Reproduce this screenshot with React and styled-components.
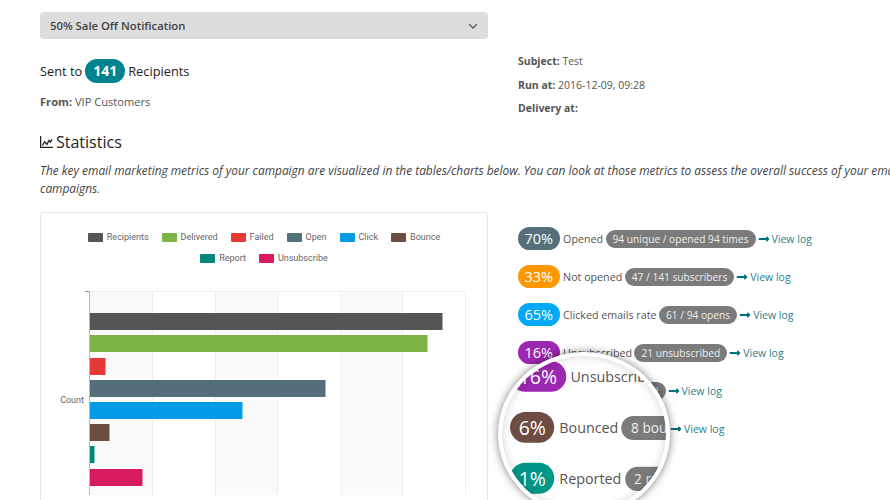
import React from 'react';
import styled, { createGlobalStyle } from 'styled-components';
import { FaLongArrowAltRight } from 'react-icons/fa';

const Global = createGlobalStyle`
  html, body { margin: 0; padding: 0; background: #fff; overflow: hidden; height: 500px; }
  body { font-family: "Open Sans", "Liberation Sans", sans-serif; color: #444; }
  #root { width: 890px; height: 500px; overflow: hidden; position: relative; }
`;

const Page = styled.div`
  width: 950px;
  padding: 12px 0 0 40px;
  box-sizing: border-box;
`;
const SelectBar = styled.div`
  width: 448px;
  height: 27px;
  box-sizing: border-box;
  background: #ddd;
  border-radius: 4px;
  padding: 0 10px;
  display: flex;
  align-items: center;
  justify-content: space-between;
  font-size: 11.3px;
  font-weight: 600;
  color: #444;
`;
const Summary = styled.div`
  display: grid;
  grid-template-columns: 478px 1fr;
  margin-top: 11px;
`;
const SentLine = styled.div`
  display: flex;
  align-items: center;
  height: 24px;
  margin-top: 9px;
  font-size: 12.8px;
  font-weight: 500;
  color: #222;
  gap: 3px;
`;
const CountBadge = styled.span`
  background: #00838f;
  color: #fff;
  font-size: 14px;
  font-weight: 700;
  height: 24px;
  line-height: 24px;
  padding: 0 8px;
  border-radius: 12px;
`;
const Meta = styled.div`
  font-size: ${p => p.$size}px;
  line-height: 16px;
  color: #555;
  margin-top: ${p => p.$top}px;
  b { font-weight: 700; }
`;
const Heading = styled.h2`
  display: flex;
  align-items: center;
  gap: 3px;
  margin: 15px 0 0;
  font-size: 16px;
  line-height: 22px;
  font-weight: 500;
  color: #222;
`;
const Intro = styled.p`
  margin: 8px 0 0;
  font-size: 11.9px;
  line-height: 18px;
  font-style: italic;
  color: #444;
`;
const Stats = styled.div`
  display: grid;
  grid-template-columns: 448px 1fr;
  column-gap: 30px;
  margin-top: 15px;
`;
const Card = styled.div`
  height: 320px;
  box-sizing: border-box;
  border: 1px solid #e6e6e6;
  border-radius: 3px;
  box-shadow: 0 0 2px rgba(0,0,0,.06);
  padding-top: 18px;
`;
const Legend = styled.div`
  display: flex;
  flex-wrap: wrap;
  justify-content: center;
  gap: 9px 13px;
  width: 380px;
  margin: 0 auto;
`;
const LegendItem = styled.div`
  display: flex;
  align-items: center;
  gap: 4px;
  height: 12px;
  font-family: Roboto, sans-serif;
  font-size: 9px;
  color: #666;
`;
const Swatch = styled.i`
  display: block;
  width: 15px;
  height: 9px;
  border-radius: 1px;
  background: ${p => p.$color};
`;
const Plot = styled.svg`
  display: block;
  margin-top: 21px;
`;
const RowList = styled.div`
  display: flex;
  flex-direction: column;
  gap: 15px;
  padding-top: 15px;
`;
const Row = styled.div`
  display: flex;
  align-items: center;
  height: 23px;
  font-size: 10.7px;
  color: #555;
  white-space: nowrap;
`;
const Percent = styled.span`
  background: ${p => p.$color};
  color: #fff;
  font-size: 14.5px;
  height: 23px;
  line-height: 23px;
  padding: 0 6.5px;
  border-radius: 11.5px;
  margin-right: 3.5px;
`;
const Detail = styled.span`
  background: #7b7b7b;
  color: #eee;
  font-size: 10.2px;
  font-weight: 500;
  height: 18px;
  line-height: 18px;
  padding: 0 7px;
  border-radius: 9px;
  margin-left: 2.5px;
  margin-right: 2px;
`;
const LogLink = styled.a`
  display: inline-flex;
  align-items: center;
  gap: 2px;
  color: #2a8090;
  font-size: 10.5px;
  svg { color: #00707c; }
`;
const Lens = styled.div`
  position: absolute;
  left: 498px;
  top: 352px;
  width: 172px;
  height: 164px;
  box-sizing: border-box;
  border: 4px solid #fff;
  border-radius: 50%;
  background: #fff;
  overflow: hidden;
  box-shadow: 0 0 8px rgba(0,0,0,.5);
  &::after {
    content: "";
    position: absolute;
    inset: 0;
    border-radius: 50%;
    box-shadow: inset 0 0 10px rgba(0,0,0,.18);
  }
`;
const LensContent = styled.div`
  position: absolute;
  left: 7.5px;
  top: 4.6px;
  width: 300px;
  transform: scale(1.34);
  transform-origin: 0 0;
`;
const LensList = styled(RowList)`
  padding-top: 0;
`;

const legend = [
  ['Recipients', '#555'], ['Delivered', '#7cb342'], ['Failed', '#e53935'], ['Open', '#546e7a'],
  ['Click', '#039be5'], ['Bounce', '#6d4c41'], ['Report', '#00897b'], ['Unsubscribe', '#d81b60'],
];
const bars = [
  [313, 352.5, '#555'], [335, 337.5, '#7cb342'], [358, 15.5, '#e53935'], [380, 235.5, '#546e7a'],
  [402, 152.5, '#039be5'], [424, 19.5, '#6d4c41'], [446, 4.5, '#00897b'], [469, 52.5, '#d81b60'],
];
const rows = [
  ['70%', '#546e7a', 'Opened', '94 unique / opened 94 times'],
  ['33%', '#ff9800', 'Not opened', '47 / 141 subscribers'],
  ['65%', '#03a9f4', 'Clicked emails rate', '61 / 94 opens'],
  ['16%', '#9c27b0', 'Unsubscribed', '21 unsubscribed'],
  ['6%', '#6d4c41', 'Bounced', '8 bounced'],
  ['1%', '#009688', 'Reported', '2 reported'],
];

const StatRow = ({ r }) => (
  <Row>
    <Percent $color={r[1]}>{r[0]}</Percent>
    {r[2]}
    <Detail>{r[3]}</Detail>
    <LogLink><FaLongArrowAltRight size={12} />View log</LogLink>
  </Row>
);

export default function App() {
  return (
    <>
      <Global />
      <Page>
        <SelectBar>
          50% Sale Off Notification
          <svg width="10" height="6" viewBox="0 0 10 6" fill="none" stroke="#666" strokeWidth="1.5"><path d="M1 1l4 4 4-4" /></svg>
        </SelectBar>
        <Summary>
          <div>
            <SentLine>Sent to <CountBadge>141</CountBadge> Recipients</SentLine>
            <Meta $size={11.1} $top={11}><b>From:</b> VIP Customers</Meta>
          </div>
          <div>
            <Meta $size={10.5} $top={3}><b>Subject:</b> Test</Meta>
            <Meta $size={10.5} $top={8}><b>Run at:</b> 2016-12-09, 09:28</Meta>
            <Meta $size={10.5} $top={7}><b>Delivery at:</b></Meta>
          </div>
        </Summary>
        <Heading>
          <svg width="13" height="12" viewBox="0 0 13 12" fill="none" stroke="#222" strokeWidth="1.3"><path d="M.6 0v11.4H13" /><path d="M2.4 9.5l2.2-3.6 2.4 2.4 2-3.8 1.4 1.6L12 3.4" /></svg>
          Statistics
        </Heading>
        <Intro>The key email marketing metrics of your campaign are visualized in the tables/charts below. You can look at those metrics to assess the overall success of your email<br />campaigns.</Intro>
        <Stats>
          <Card>
            <Legend>
              {legend.map(l => (
                <LegendItem key={l[0]}><Swatch $color={l[1]} />{l[0]}</LegendItem>
              ))}
            </Legend>
            <Plot width="446" height="210" viewBox="41 285 446 210">
              {[89, 215, 340].map(x => <rect key={x} x={x} y="291" width="63" height="210" fill="#fafafa" />)}
              {[152.5, 215.5, 278, 340.5, 402.5, 465.5].map(x => <line key={x} x1={x} x2={x} y1="291" y2="501" stroke="#eee" />)}
              <line x1="89" x2="466" y1="291.5" y2="291.5" stroke="#eee" />
              <line x1="85" x2="89" y1="291.5" y2="291.5" stroke="#999" />
              <line x1="89.5" x2="89.5" y1="291" y2="501" stroke="#bbb" />
              {bars.map(b => <rect key={b[0]} x="90" y={b[0]} width={b[1]} height="17" fill={b[2]} />)}
              <text x="84" y="403" textAnchor="end" fontFamily="Roboto, sans-serif" fontSize="9" fill="#666">Count</text>
            </Plot>
          </Card>
          <RowList>
            {rows.map(r => <StatRow key={r[2]} r={r} />)}
          </RowList>
        </Stats>
      </Page>
      <Lens>
        <LensContent>
          <LensList>
            {rows.slice(3).map(r => <StatRow key={r[2]} r={r} />)}
          </LensList>
        </LensContent>
      </Lens>
    </>
  );
}
